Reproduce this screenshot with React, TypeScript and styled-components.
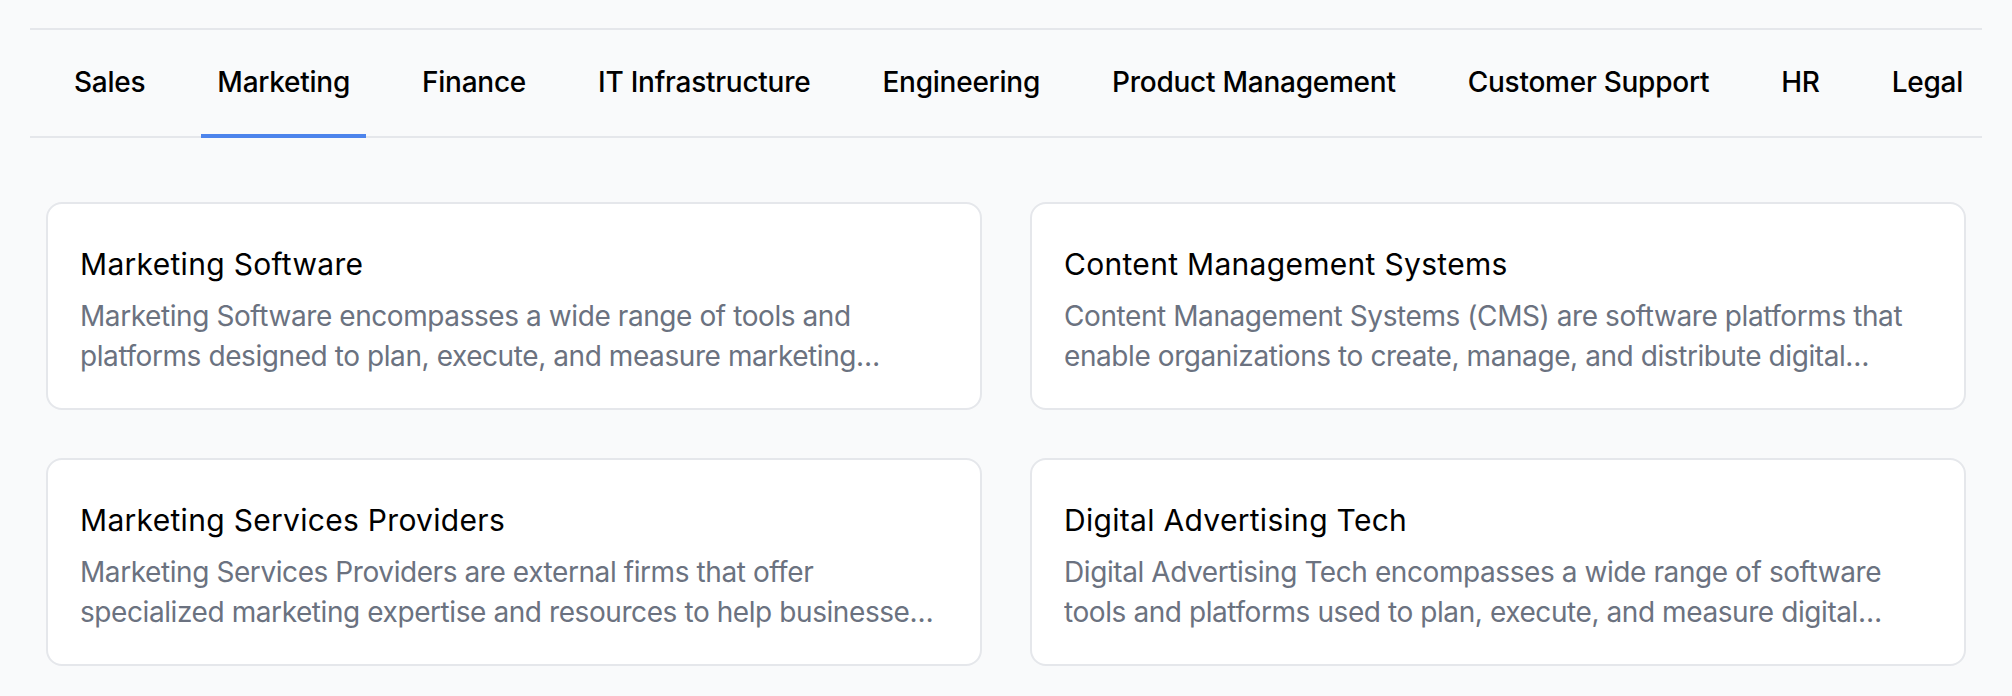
import React, { useState } from "react";
import styled, { createGlobalStyle } from "styled-components";

const GlobalStyle = createGlobalStyle`
  html, body {
    margin: 0;
    padding: 0;
    background: #f9fafb;
    font-family: Inter, "Noto Sans", "Liberation Sans", sans-serif;
    -webkit-font-smoothing: antialiased;
  }
  * { box-sizing: border-box; }
`;

const Page = styled.div`
  padding: 28px 30px 0 30px;
  background: #f9fafb;
  min-height: 696px;
`;

const TabList = styled.div`
  display: flex;
  gap: 40px;
  padding: 0 28px;
  border-top: 2px solid #e5e7eb;
  border-bottom: 2px solid #e5e7eb;
`;

const Tab = styled.button<{ $active?: boolean }>`
  appearance: none;
  background: none;
  border: none;
  margin: 0 0 -2px 0;
  padding: 32px 16px 32px 16px;
  border-bottom: 4px solid ${(p) => (p.$active ? "#4d84ec" : "transparent")};
  font-family: inherit;
  font-size: 28px;
  line-height: 40px;
  font-weight: 500;
  letter-spacing: -0.25px;
  color: #000;
  white-space: nowrap;
  cursor: pointer;
  flex-shrink: 0;
`;

const Grid = styled.div`
  display: grid;
  grid-template-columns: 1fr 1fr;
  gap: 48px 48px;
  padding: 64px 16px 0 16px;
`;

const Card = styled.div`
  background: #fff;
  border: 2px solid #e5e7eb;
  border-radius: 16px;
  padding: 32px;
`;

const CardTitle = styled.h3`
  margin: 0 0 4px 0;
  font-size: 30px;
  line-height: 56px;
  font-weight: 400;
  letter-spacing: 0.3px;
  color: #000;
`;

const CardText = styled.p`
  margin: 0;
  font-size: 28px;
  line-height: 40px;
  letter-spacing: -0.42px;
  color: #6b7280;
  display: -webkit-box;
  -webkit-line-clamp: 2;
  -webkit-box-orient: vertical;
  overflow: hidden;
`;

const tabs = [
  "Sales",
  "Marketing",
  "Finance",
  "IT Infrastructure",
  "Engineering",
  "Product Management",
  "Customer Support",
  "HR",
  "Legal",
];

const cards = [
  {
    title: "Marketing Software",
    text: "Marketing Software encompasses a wide range of tools and platforms designed to plan, execute, and measure marketing campaigns across multiple channels.",
  },
  {
    title: "Content Management Systems",
    text: "Content Management Systems (CMS) are software platforms that enable organizations to create, manage, and distribute digital content across websites and channels.",
  },
  {
    title: "Marketing Services Providers",
    text: "Marketing Services Providers are external firms that offer specialized marketing expertise and resources to help businesses grow their brands and reach customers.",
  },
  {
    title: "Digital Advertising Tech",
    text: "Digital Advertising Tech encompasses a wide range of software tools and platforms used to plan, execute, and measure digital advertising campaigns.",
  },
];

export default function App() {
  const [active, setActive] = useState("Marketing");
  return (
    <>
      <GlobalStyle />
      <Page>
        <TabList>
          {tabs.map((t) => (
            <Tab key={t} $active={t === active} onClick={() => setActive(t)}>
              {t}
            </Tab>
          ))}
        </TabList>
        <Grid>
          {cards.map((c) => (
            <Card key={c.title}>
              <CardTitle>{c.title}</CardTitle>
              <CardText>{c.text}</CardText>
            </Card>
          ))}
        </Grid>
      </Page>
    </>
  );
}
